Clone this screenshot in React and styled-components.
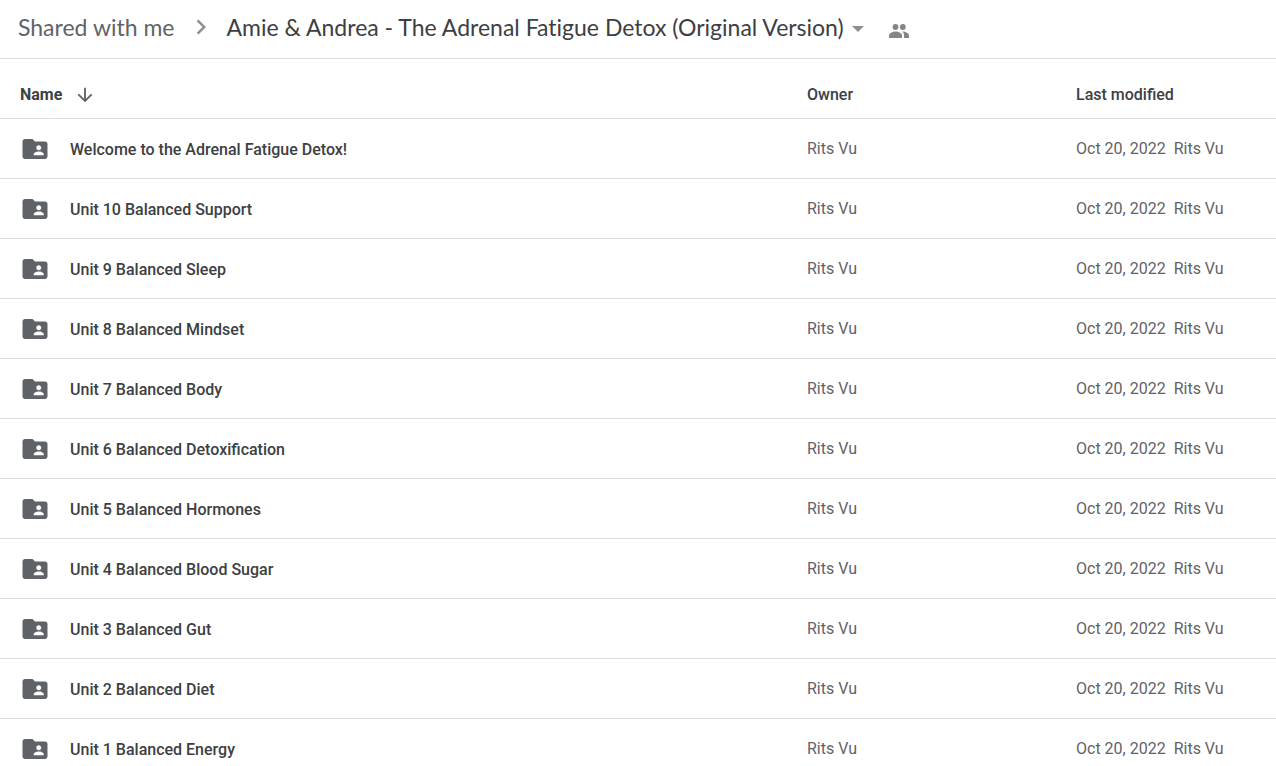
import React from "react";
import styled, { createGlobalStyle } from "styled-components";

const GlobalStyle = createGlobalStyle`
  *, *::before, *::after { box-sizing: border-box; }
  body {
    margin: 0;
    background: #fff;
    color: #3c4043;
    font-family: Roboto, "Liberation Sans", sans-serif;
    font-size: 16px;
    line-height: 20px;
  }
`;

const Page = styled.main`
  width: 100%;
`;

const Breadcrumbs = styled.nav`
  display: flex;
  align-items: center;
  height: 59px;
  padding: 0 18px 4px;
  border-bottom: 1px solid #dadce0;
  font-family: Lato, Roboto, sans-serif;
  font-size: 23px;
  font-variant-ligatures: none;
  line-height: 28px;
  white-space: nowrap;
`;

const CrumbLink = styled.a`
  color: #5f6368;
  text-decoration: none;
`;

const Chevron = styled.svg`
  flex: none;
  margin: 0 11px;
  fill: #8f8f8f;
`;

const CrumbButton = styled.button`
  display: flex;
  align-items: center;
  gap: 8px;
  padding: 0;
  border: 0;
  background: none;
  color: #3c4043;
  font: inherit;
  font-variant-ligatures: none;
  cursor: pointer;
`;

const CrumbTitle = styled.h1`
  margin: 0;
  font: inherit;
`;

const Caret = styled.svg`
  margin-top: 4px;
  fill: #8f8f8f;
`;

const ShareButton = styled.button`
  display: flex;
  margin-left: 23px;
  padding: 8px 0 0;
  border: 0;
  background: none;
  cursor: pointer;
`;

const FileTable = styled.table`
  width: 100%;
  border-collapse: separate;
  border-spacing: 0;
  table-layout: fixed;
`;

const HeadCell = styled.th`
  width: ${(p) => p.$width || "auto"};
  height: 60px;
  padding: ${(p) => (p.$first ? "12px 0 0 20px" : "12px 0 0")};
  border-bottom: 1px solid #dadce0;
  font-weight: 500;
  text-align: left;
`;

const SortButton = styled.button`
  display: flex;
  align-items: center;
  gap: 12px;
  height: 20px;
  padding: 0;
  border: 0;
  background: none;
  color: inherit;
  font: inherit;
  font-weight: 700;
  line-height: 20px;
  cursor: pointer;
`;

const Cell = styled.td`
  height: 60px;
  padding: 0;
  border-bottom: 1px solid #dadce0;
  color: #5f6368;
  white-space: nowrap;
`;

const NameCell = styled(Cell)`
  padding-left: 20px;
  color: #3c4043;
  font-weight: 500;
`;

const FileName = styled.div`
  display: flex;
  align-items: center;
  gap: 20px;
`;

const FileLabel = styled.span`
  padding-top: 2px;
`;

const Modifier = styled.span`
  margin-left: 8px;
`;

const files = [
  "Welcome to the Adrenal Fatigue Detox!",
  "Unit 10 Balanced Support",
  "Unit 9 Balanced Sleep",
  "Unit 8 Balanced Mindset",
  "Unit 7 Balanced Body",
  "Unit 6 Balanced Detoxification",
  "Unit 5 Balanced Hormones",
  "Unit 4 Balanced Blood Sugar",
  "Unit 3 Balanced Gut",
  "Unit 2 Balanced Diet",
  "Unit 1 Balanced Energy",
].map((name) => ({ name, owner: "Rits Vu", modified: "Oct 20, 2022" }));

function SharedFolderIcon() {
  return (
    <svg width="30" height="30" viewBox="0 0 24 24" fill="#5f6368" aria-hidden="true">
      <path d="M20 6h-8l-2-2H4c-1.1 0-1.99.9-1.99 2L2 18c0 1.1.9 2 2 2h16c1.1 0 2-.9 2-2V8c0-1.1-.9-2-2-2zm-5 3c1.1 0 2 .9 2 2s-.9 2-2 2-2-.9-2-2 .9-2 2-2zm4 8h-8v-1c0-1.33 2.67-2 4-2s4 .67 4 2v1z" />
    </svg>
  );
}

function FileRow({ file }) {
  return (
    <tr>
      <NameCell>
        <FileName>
          <SharedFolderIcon />
          <FileLabel>{file.name}</FileLabel>
        </FileName>
      </NameCell>
      <Cell>{file.owner}</Cell>
      <Cell>
        {file.modified}
        <Modifier>{file.owner}</Modifier>
      </Cell>
    </tr>
  );
}

export default function App() {
  return (
    <Page>
      <GlobalStyle />
      <Breadcrumbs aria-label="Folder path">
        <CrumbLink href="#shared">Shared with me</CrumbLink>
        <Chevron width="30" height="30" viewBox="0 0 24 24" aria-hidden="true">
          <path d="M10 6L8.59 7.41 13.17 12l-4.58 4.59L10 18l6-6z" />
        </Chevron>
        <CrumbButton type="button">
          <CrumbTitle>Amie &amp; Andrea - The Adrenal Fatigue Detox (Original Version)</CrumbTitle>
          <Caret width="12" height="6" viewBox="0 0 12 6" aria-hidden="true">
            <path d="M0 0l6 6 6-6z" />
          </Caret>
        </CrumbButton>
        <ShareButton type="button" aria-label="Shared with people">
          <svg width="24" height="24" viewBox="0 0 24 24" fill="#838588" aria-hidden="true">
            <circle cx="8.5" cy="8" r="2.9" />
            <circle cx="15.8" cy="8" r="2.9" />
            <path d="M2 19v-2.400c0-2.300 3.500-4 6.500-4s6.500 1.700 6.500 4V19zM15.500 12.500c3.200.1 6.500 1.800 6.500 4.100V19h-5v-2.400c0-1.700-.6-3-1.500-4.100z" />
          </svg>
        </ShareButton>
      </Breadcrumbs>
      <FileTable>
        <thead>
          <tr>
            <HeadCell $first scope="col">
              <SortButton type="button">
                Name
                <svg width="22" height="22" viewBox="0 0 24 24" fill="#5f6368" aria-hidden="true">
                  <path d="M20 12l-1.410-1.410L13 16.170V4h-2v12.170l-5.580-5.590L4 12l8 8 8-8z" />
                </svg>
              </SortButton>
            </HeadCell>
            <HeadCell $width="269px" scope="col">Owner</HeadCell>
            <HeadCell $width="200px" scope="col">Last modified</HeadCell>
          </tr>
        </thead>
        <tbody>
          {files.map((file) => (
            <FileRow key={file.name} file={file} />
          ))}
        </tbody>
      </FileTable>
    </Page>
  );
}
